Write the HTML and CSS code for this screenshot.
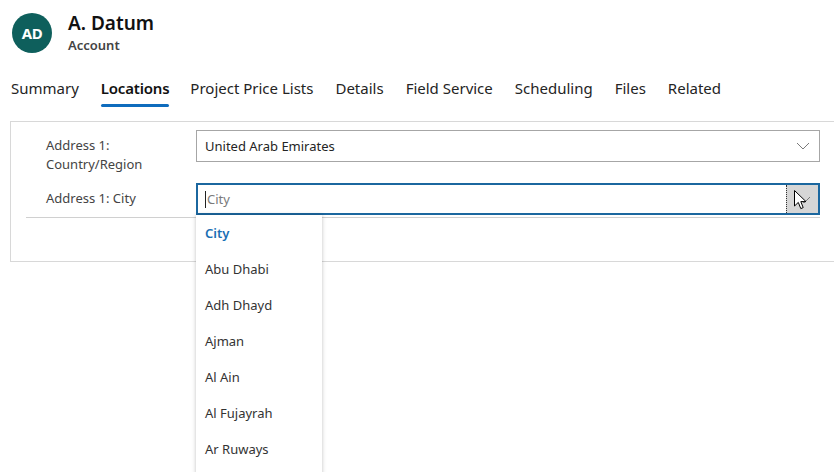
FILE: index.html
```html
<!DOCTYPE html>
<html>
<head>
<meta charset="utf-8">
<link rel="stylesheet" href="styles.css">
</head>
<body>
<header class="header">
  <div class="avatar">AD</div>
  <div class="titles">
    <div class="title">A. Datum</div>
    <div class="subtitle">Account</div>
  </div>
</header>
<nav class="tabs">
  <span class="tab">Summary</span>
  <span class="tab active">Locations</span>
  <span class="tab">Project Price Lists</span>
  <span class="tab">Details</span>
  <span class="tab">Field Service</span>
  <span class="tab">Scheduling</span>
  <span class="tab">Files</span>
  <span class="tab">Related</span>
</nav>
<section class="card">
  <div class="row">
    <div class="label">Address 1:<br>Country/Region</div>
    <div class="select">
      <span class="value">United Arab Emirates</span>
      <svg class="chev" width="14" height="8" viewBox="0 0 14 8"><path d="M1 1 L7 7 L13 1" fill="none" stroke="#7a7a7a" stroke-width="1"/></svg>
    </div>
  </div>
  <div class="row row-city">
    <div class="label">Address 1: City</div>
    <div class="combo">
      <span class="caret"></span>
      <span class="placeholder">City</span>
      <span class="btn">
        <svg class="chev2" width="14" height="8" viewBox="0 0 14 8"><path d="M1 1 L7 7 L13 1" fill="none" stroke="#7a7a7a" stroke-width="1"/></svg>
        <svg class="cursor" width="13" height="20" viewBox="0 0 13 20"><path d="M0.5 0.5 L0.5 16 L4.3 12.4 L6.8 18.6 L9.2 17.6 L6.8 11.6 L12 11.6 Z" fill="#fff" stroke="#000" stroke-width="1" stroke-linejoin="round"/></svg>
      </span>
    </div>
    <ul class="menu">
      <li class="item head">City</li>
      <li class="item">Abu Dhabi</li>
      <li class="item">Adh Dhayd</li>
      <li class="item">Ajman</li>
      <li class="item">Al Ain</li>
      <li class="item">Al Fujayrah</li>
      <li class="item">Ar Ruways</li>
    </ul>
  </div>
  <div class="divider"></div>
</section>
</body>
</html>
```
FILE: styles.css
```css
html, body {
  margin: 0;
  padding: 0;
  background: #fff;
  overflow: hidden;
  height: 472px;
}
body {
  font-family: "Segoe UI", "Noto Sans", "Open Sans", sans-serif;
  color: #242424;
}
.header {
  display: flex;
  align-items: flex-start;
  padding: 13px 0 0 12px;
  height: 63px;
  box-sizing: border-box;
}
.avatar {
  width: 40px;
  height: 40px;
  border-radius: 50%;
  background: #0e5f5c;
  color: #fff;
  font-weight: 700;
  font-size: 15px;
  display: flex;
  align-items: center;
  justify-content: center;
  letter-spacing: -0.5px;
}
.titles {
  margin-left: 16px;
  margin-top: -2px;
}
.title {
  font-size: 19px;
  font-weight: 600;
  line-height: 24px;
  color: #111;
}
.subtitle {
  font-size: 13px;
  font-weight: 600;
  color: #444;
  line-height: 18px;
  margin-top: 1px;
}
.tabs {
  display: flex;
  padding-left: 11px;
  height: 58px;
  box-sizing: border-box;
  padding-top: 13px;
}
.tab {
  font-size: 15px;
  line-height: 24px;
  margin-right: 22px;
  color: #242424;
  position: relative;
  height: 30px;
}
.tab.active {
  font-weight: 600;
  color: #111;
  letter-spacing: -0.2px;
  margin-right: 21px;
}
.tab.active::after {
  content: "";
  position: absolute;
  left: 0;
  right: 0;
  bottom: -1px;
  height: 3px;
  border-radius: 2px;
  background: #0f6cbd;
}
.card {
  margin-left: 10px;
  margin-right: -20px;
  border: 1px solid #d8d8d8;
  height: 141px;
  box-sizing: border-box;
  padding: 8px 0 0 15px;
}
.row {
  display: grid;
  grid-template-columns: 170px 624px;
  position: relative;
}
.label {
  font-size: 13px;
  line-height: 19px;
  color: #444;
  padding-left: 20px;
  padding-top: 6px;
}
.select {
  height: 32px;
  border: 1px solid #a6a6a6;
  box-sizing: border-box;
  display: flex;
  align-items: center;
  padding-left: 8px;
  position: relative;
}
.value {
  font-size: 13px;
  color: #242424;
}
.chev {
  position: absolute;
  right: 9px;
  top: 11px;
}
.row-city {
  margin-top: 9px;
}
.row-city .label {
  padding-top: 6px;
}
.combo {
  height: 32px;
  border: 2px solid #1b679f;
  box-sizing: border-box;
  display: flex;
  align-items: center;
  padding-left: 7px;
  position: relative;
}
.caret {
  width: 1px;
  height: 17px;
  background: #222;
  margin-right: 1px;
}
.placeholder {
  font-size: 13px;
  color: #7a7a7a;
}
.btn {
  position: absolute;
  right: 0;
  top: 0;
  bottom: 0;
  width: 31px;
  background: #d6d6d6;
  border-left: 1px dotted #333;
}
.chev2 {
  position: absolute;
  left: 10px;
  top: 11px;
}
.cursor {
  position: absolute;
  left: 7px;
  top: 5px;
}
.menu {
  position: absolute;
  left: 170px;
  top: 32px;
  width: 126px;
  margin: 0;
  padding: 0 0 40px;
  list-style: none;
  background: #fff;
  box-shadow: 0 0 4px rgba(0,0,0,0.25);
  z-index: 5;
}
.item {
  height: 36px;
  line-height: 36px;
  font-size: 13px;
  color: #333;
  padding-left: 9px;
}
.item.head {
  color: #1a6fb4;
  font-weight: 600;
}
.divider {
  height: 1px;
  background: #d0d0d0;
  margin-top: 2px;
  margin-right: 33px;
}
```
